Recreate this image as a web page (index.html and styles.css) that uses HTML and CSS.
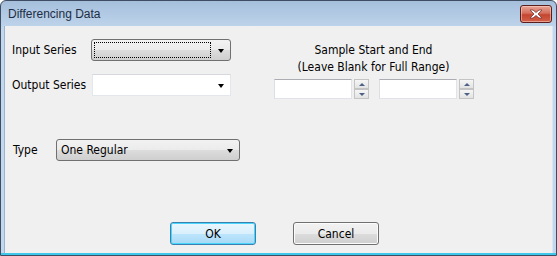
FILE: index.html
```html
<!DOCTYPE html>
<html>
<head>
<meta charset="utf-8">
<link rel="stylesheet" href="styles.css">
</head>
<body>
<div class="window">
  <div class="titlebar">
    <span class="title">Differencing Data</span>
    <div class="close-btn">
      <svg width="14" height="10" viewBox="0 0 14 10"><path d="M1 1 L4 1 L7 3.5 L10 1 L13 1 L9 5 L13 9 L10 9 L7 6.5 L4 9 L1 9 L5 5 Z" fill="#fff" stroke="#7a3a33" stroke-width="0.8"/></svg>
    </div>
  </div>
  <div class="client">
    <div class="top-section">
      <div class="left-col">
        <div class="row">
          <span class="label label-input">Input Series</span>
          <div class="combo combo-button combo-input">
            <div class="focus-rect"></div>
            <span class="arrow"></span>
          </div>
        </div>
        <div class="row row-output">
          <span class="label label-output">Output Series</span>
          <div class="combo combo-edit combo-output">
            <span class="arrow"></span>
          </div>
        </div>
      </div>
      <div class="right-col">
        <div class="sample-text">Sample Start and End<br>(Leave Blank for Full Range)</div>
        <div class="spinners">
          <div class="spinner">
            <div class="textbox"></div>
            <div class="spin">
              <div class="spin-btn"><span class="tri-up"></span></div>
              <div class="spin-btn"><span class="tri-down"></span></div>
            </div>
          </div>
          <div class="spinner">
            <div class="textbox"></div>
            <div class="spin">
              <div class="spin-btn"><span class="tri-up"></span></div>
              <div class="spin-btn"><span class="tri-down"></span></div>
            </div>
          </div>
        </div>
      </div>
    </div>
    <div class="row row-type">
      <span class="label label-type">Type</span>
      <div class="combo combo-button combo-type">
        <span class="combo-text">One Regular</span>
        <span class="arrow"></span>
      </div>
    </div>
    <div class="buttons">
      <div class="btn btn-default">OK</div>
      <div class="btn btn-cancel">Cancel</div>
    </div>
  </div>
</div>
</body>
</html>
```

FILE: styles.css
```css
html, body {
  margin: 0;
  padding: 0;
  background: #ffffff;
}

.window {
  width: 557px;
  height: 256px;
  box-sizing: border-box;
  border: 1px solid #3e4d62;
  border-radius: 6px 6px 0 0;
  background: linear-gradient(#a5bfdc 0px, #bdd3ea 25px, #c2d8ee 26px, #c2d8ee 252px, #3fc7ea 252px);
  display: flex;
  flex-direction: column;
  padding: 0 3px 2px 3px;
  font-family: "DejaVu Sans Condensed", "DejaVu Sans", sans-serif;
  font-stretch: condensed;
  font-size: 12px;
  color: #000;
  overflow: hidden;
}

.titlebar {
  height: 25px;
  flex: none;
  display: flex;
  align-items: flex-start;
  justify-content: space-between;
}

.title {
  font-family: "Liberation Sans", Arial, sans-serif;
  font-stretch: normal;
  font-size: 12px;
  color: #1e2d44;
  margin-left: 4px;
  margin-top: 5px;
  line-height: 16px;
}

.close-btn {
  width: 30px;
  height: 16px;
  margin-top: 4px;
  margin-right: 1px;
  border: 1px solid #5a1f1a;
  border-radius: 3px;
  background: linear-gradient(#e8a495 0%, #d46e5c 45%, #c4452f 55%, #d2604b 100%);
  box-shadow: inset 0 0 0 1px rgba(255, 220, 210, 0.5);
  display: flex;
  align-items: center;
  justify-content: center;
}

.client {
  flex: 1;
  background: #f0f0f0;
  border-left: 1px solid #9fb4cc;
  border-right: 1px solid #dae6f3;
  display: flex;
  flex-direction: column;
  padding-left: 7px;
}

.top-section {
  display: flex;
  margin-top: 13px;
}

.left-col {
  display: flex;
  flex-direction: column;
}

.row {
  display: flex;
  align-items: center;
}

.row-output {
  margin-top: 13px;
}

.label-input {
  width: 79px;
}

.label-output {
  width: 80px;
}

.label-type {
  width: 43px;
  margin-left: 1px;
}

.combo {
  position: relative;
  box-sizing: border-box;
  height: 22px;
  display: flex;
  align-items: center;
}

.combo-button {
  border: 1px solid #707070;
  border-radius: 3px;
  background: linear-gradient(#f2f2f2 0%, #ebebeb 50%, #dddddd 50%, #cfcfcf 100%);
}

.combo-input {
  width: 140px;
}

.combo-output {
  width: 139px;
  border: 1px solid #e3e6ea;
  border-top-color: #d5d8dd;
  background: #ffffff;
}

.combo-type {
  width: 184px;
}

.focus-rect {
  position: absolute;
  left: 2px;
  top: 2px;
  width: 117px;
  height: 16px;
  box-sizing: border-box;
  border: 1px dotted #000;
}

.arrow {
  position: absolute;
  right: 6px;
  top: 9px;
  width: 0;
  height: 0;
  border-left: 3.5px solid transparent;
  border-right: 3.5px solid transparent;
  border-top: 4px solid #000;
}

.combo-text {
  margin-left: 4px;
}

.right-col {
  margin-left: 43px;
  width: 199px;
  display: flex;
  flex-direction: column;
  margin-top: 3px;
}

.sample-text {
  text-align: center;
  line-height: 17px;
}

.spinners {
  display: flex;
  margin-top: 3px;
}

.spinner {
  display: flex;
}

.spinner + .spinner {
  margin-left: 10px;
}

.textbox {
  width: 78px;
  height: 20px;
  box-sizing: border-box;
  background: #fff;
  border: 1px solid #e2e3ea;
  border-top-color: #abadb3;
  border-left-color: #dbdfe6;
}

.spin {
  margin-left: 2px;
  display: flex;
  flex-direction: column;
  width: 15px;
}

.spin-btn {
  height: 10px;
  box-sizing: border-box;
  border: 1px solid #c4c4c4;
  background: linear-gradient(#f6f6f6, #e3e3e3);
  display: flex;
  align-items: center;
  justify-content: center;
}

.tri-up {
  width: 0;
  height: 0;
  border-left: 3px solid transparent;
  border-right: 3px solid transparent;
  border-bottom: 3px solid #4d6185;
}

.tri-down {
  width: 0;
  height: 0;
  border-left: 3px solid transparent;
  border-right: 3px solid transparent;
  border-top: 3px solid #4d6185;
}

.row-type {
  margin-top: 40px;
}

.buttons {
  display: flex;
  margin-top: 61px;
  margin-left: 158px;
}

.btn {
  width: 86px;
  height: 23px;
  box-sizing: border-box;
  border-radius: 3px;
  display: flex;
  align-items: center;
  justify-content: center;
}

.btn-default {
  border: 1px solid #3c7fb1;
  background: linear-gradient(#eaf6fd 0%, #d9f0fc 50%, #bee6fd 50%, #a7d9f5 100%);
  box-shadow: inset 0 0 0 1px #48d6fb;
}

.btn-cancel {
  margin-left: 37px;
  border: 1px solid #707070;
  background: linear-gradient(#f2f2f2 0%, #ebebeb 50%, #dddddd 50%, #cfcfcf 100%);
  box-shadow: inset 0 0 0 1px #fbfbfb;
}
```
